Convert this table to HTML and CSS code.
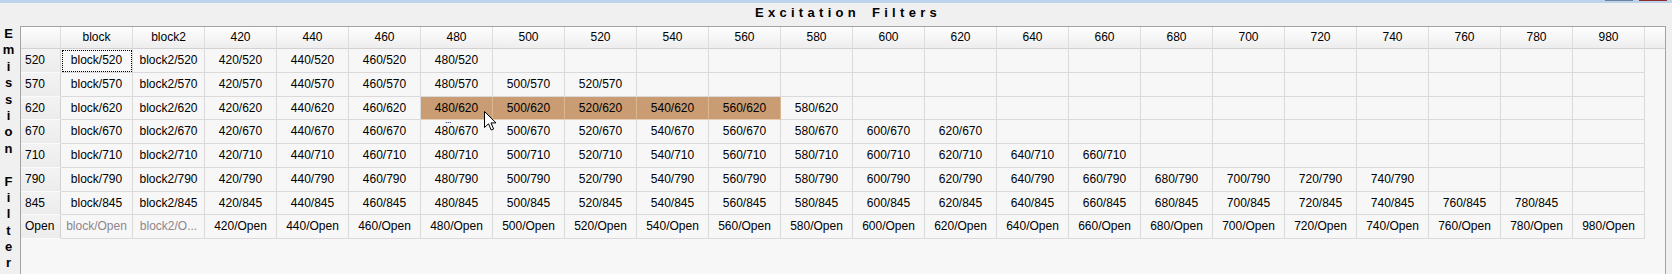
FILE: index.html
```html
<!DOCTYPE html>
<html>
<head>
<meta charset="utf-8">
<link rel="stylesheet" href="styles.css">
</head>
<body>
<div class="titlebar">
  <span class="wb wb-min"></span>
  <span class="wb wb-close"></span>
</div>
<div class="main">
  <div class="vlabel">
    <span>E</span><span>m</span><span>i</span><span>s</span><span>s</span><span>i</span><span>o</span><span>n</span><span>&nbsp;</span><span>F</span><span>i</span><span>l</span><span>t</span><span>e</span><span>r</span>
  </div>
  <div class="panel">
    <div class="title">Excitation Filters</div>
    <div class="tablebox">
      <div class="row head">
        <div class="h"></div>
        <div class="h">block</div><div class="h">block2</div><div class="h">420</div><div class="h">440</div><div class="h">460</div><div class="h">480</div><div class="h">500</div><div class="h">520</div><div class="h">540</div><div class="h">560</div><div class="h">580</div><div class="h">600</div><div class="h">620</div><div class="h">640</div><div class="h">660</div><div class="h">680</div><div class="h">700</div><div class="h">720</div><div class="h">740</div><div class="h">760</div><div class="h">780</div><div class="h">980</div>
        <div class="h filler"></div>
      </div>

      <div class="row">
        <div class="rh">520</div>
        <div class="c focus">block/520</div><div class="c">block2/520</div><div class="c">420/520</div><div class="c">440/520</div><div class="c">460/520</div><div class="c">480/520</div>
        <div class="c"></div><div class="c"></div><div class="c"></div><div class="c"></div><div class="c"></div><div class="c"></div><div class="c"></div><div class="c"></div><div class="c"></div><div class="c"></div><div class="c"></div><div class="c"></div><div class="c"></div><div class="c"></div><div class="c"></div><div class="c"></div>
      </div>

      <div class="row">
        <div class="rh">570</div>
        <div class="c">block/570</div><div class="c">block2/570</div><div class="c">420/570</div><div class="c">440/570</div><div class="c">460/570</div><div class="c">480/570</div><div class="c">500/570</div><div class="c">520/570</div>
        <div class="c"></div><div class="c"></div><div class="c"></div><div class="c"></div><div class="c"></div><div class="c"></div><div class="c"></div><div class="c"></div><div class="c"></div><div class="c"></div><div class="c"></div><div class="c"></div><div class="c"></div><div class="c"></div>
      </div>

      <div class="row">
        <div class="rh">620</div>
        <div class="c">block/620</div><div class="c">block2/620</div><div class="c">420/620</div><div class="c">440/620</div><div class="c">460/620</div><div class="c sel">480/620</div><div class="c sel">500/620</div><div class="c sel">520/620</div><div class="c sel">540/620</div><div class="c sel">560/620</div><div class="c">580/620</div>
        <div class="c"></div><div class="c"></div><div class="c"></div><div class="c"></div><div class="c"></div><div class="c"></div><div class="c"></div><div class="c"></div><div class="c"></div><div class="c"></div><div class="c"></div>
      </div>

      <div class="row">
        <div class="rh">670</div>
        <div class="c">block/670</div><div class="c">block2/670</div><div class="c">420/670</div><div class="c">440/670</div><div class="c">460/670</div><div class="c">480/670</div><div class="c">500/670</div><div class="c">520/670</div><div class="c">540/670</div><div class="c">560/670</div><div class="c">580/670</div><div class="c">600/670</div><div class="c">620/670</div>
        <div class="c"></div><div class="c"></div><div class="c"></div><div class="c"></div><div class="c"></div><div class="c"></div><div class="c"></div><div class="c"></div><div class="c"></div>
      </div>

      <div class="row">
        <div class="rh">710</div>
        <div class="c">block/710</div><div class="c">block2/710</div><div class="c">420/710</div><div class="c">440/710</div><div class="c">460/710</div><div class="c">480/710</div><div class="c">500/710</div><div class="c">520/710</div><div class="c">540/710</div><div class="c">560/710</div><div class="c">580/710</div><div class="c">600/710</div><div class="c">620/710</div><div class="c">640/710</div><div class="c">660/710</div>
        <div class="c"></div><div class="c"></div><div class="c"></div><div class="c"></div><div class="c"></div><div class="c"></div><div class="c"></div>
      </div>

      <div class="row">
        <div class="rh">790</div>
        <div class="c">block/790</div><div class="c">block2/790</div><div class="c">420/790</div><div class="c">440/790</div><div class="c">460/790</div><div class="c">480/790</div><div class="c">500/790</div><div class="c">520/790</div><div class="c">540/790</div><div class="c">560/790</div><div class="c">580/790</div><div class="c">600/790</div><div class="c">620/790</div><div class="c">640/790</div><div class="c">660/790</div><div class="c">680/790</div><div class="c">700/790</div><div class="c">720/790</div><div class="c">740/790</div>
        <div class="c"></div><div class="c"></div><div class="c"></div>
      </div>

      <div class="row">
        <div class="rh">845</div>
        <div class="c">block/845</div><div class="c">block2/845</div><div class="c">420/845</div><div class="c">440/845</div><div class="c">460/845</div><div class="c">480/845</div><div class="c">500/845</div><div class="c">520/845</div><div class="c">540/845</div><div class="c">560/845</div><div class="c">580/845</div><div class="c">600/845</div><div class="c">620/845</div><div class="c">640/845</div><div class="c">660/845</div><div class="c">680/845</div><div class="c">700/845</div><div class="c">720/845</div><div class="c">740/845</div><div class="c">760/845</div><div class="c">780/845</div>
        <div class="c"></div>
      </div>

      <div class="row">
        <div class="rh">Open</div>
        <div class="c dis">block/Open</div><div class="c dis">block2/O...</div><div class="c">420/Open</div><div class="c">440/Open</div><div class="c">460/Open</div><div class="c">480/Open</div><div class="c">500/Open</div><div class="c">520/Open</div><div class="c">540/Open</div><div class="c">560/Open</div><div class="c">580/Open</div><div class="c">600/Open</div><div class="c">620/Open</div><div class="c">640/Open</div><div class="c">660/Open</div><div class="c">680/Open</div><div class="c">700/Open</div><div class="c">720/Open</div><div class="c">740/Open</div><div class="c">760/Open</div><div class="c">780/Open</div><div class="c">980/Open</div>
      </div>
    </div>
  </div>
</div>
<span class="tipdots">...</span>
<svg class="cursor" width="13" height="21" viewBox="0 0 13 21"><path d="M0.5 0.5 L0.5 16.5 L4.5 12.8 L7.2 19 L9.6 18 L7 11.9 L12 11.9 Z" fill="#fff" stroke="#000" stroke-width="1" stroke-linejoin="miter"/></svg>
</body>
</html>
```
FILE: styles.css
```css
* { box-sizing: border-box; }
html, body { margin: 0; padding: 0; }
body {
  width: 1672px;
  height: 274px;
  overflow: hidden;
  background: #f0f0f0;
  font-family: "Liberation Sans", Arial, sans-serif;
  font-size: 12px;
  color: #000;
  position: relative;
}
.titlebar {
  height: 3px;
  background: #bcd3ea;
  display: flex;
  justify-content: flex-end;
  align-items: flex-start;
  gap: 6px;
  padding-right: 5px;
}
.wb { display: block; height: 1px; }
.wb-min { width: 28px; background: #6f819a; }
.wb-close { width: 28px; background: #8f2a2a; }

.main {
  height: 271px;
  display: flex;
}
.vlabel {
  width: 20px;
  padding-top: 23px;
  display: flex;
  flex-direction: column;
  font-weight: bold;
  font-size: 13px;
}
.vlabel span {
  display: block;
  height: 16.4px;
  line-height: 16.4px;
  text-align: center;
  padding-right: 3px;
}
.panel {
  flex: 1;
  margin-right: 6px;
  display: flex;
  flex-direction: column;
}
.title {
  height: 23px;
  line-height: 20px;
  text-align: center;
  font-weight: bold;
  font-size: 13px;
  letter-spacing: 4.3px;
  word-spacing: 4px;
  padding-left: 10px;
}
.tablebox {
  flex: 1;
  border: 1px solid #a3a3a3;
  border-bottom: none;
  background: #f7f7f7;
  overflow: hidden;
}
.row {
  display: grid;
  grid-template-columns: 40px repeat(22, 72px);
  height: 23.75px;
}
.row.head {
  grid-template-columns: 40px repeat(22, 72px) 1fr;
  height: 22px;
}
.h {
  background: linear-gradient(#fdfdfd 0%, #f7f7f7 45%, #ededed 100%);
  border-right: 1px solid #dedede;
  border-bottom: 1px solid #d2d2d2;
  text-align: center;
  line-height: 21px;
  white-space: nowrap;
}
.h.filler { border-right: none; }
.rh {
  background: linear-gradient(#f3f3f3, #ececec);
  border-right: 1px solid #d2d2d2;
  border-bottom: 1px solid #fafafa;
  padding-left: 4px;
  line-height: 23px;
  white-space: nowrap;
  overflow: hidden;
}
.c {
  border-right: 1px solid #dadada;
  border-bottom: 1px solid #dadada;
  text-align: center;
  line-height: 23px;
  white-space: nowrap;
  overflow: hidden;
}
.c.focus {
  outline: 1px dotted #000;
  outline-offset: -2px;
}
.c.sel {
  background: #c99c74;
  border-right-color: #dcb892;
  border-bottom-color: #e6cdb4;
}
.c.dis { color: #8e868e; }

.tipdots {
  position: absolute;
  left: 445px;
  top: 116px;
  font-size: 9px;
  line-height: 9px;
  letter-spacing: -0.5px;
}
.cursor {
  position: absolute;
  left: 484px;
  top: 111px;
}
```
